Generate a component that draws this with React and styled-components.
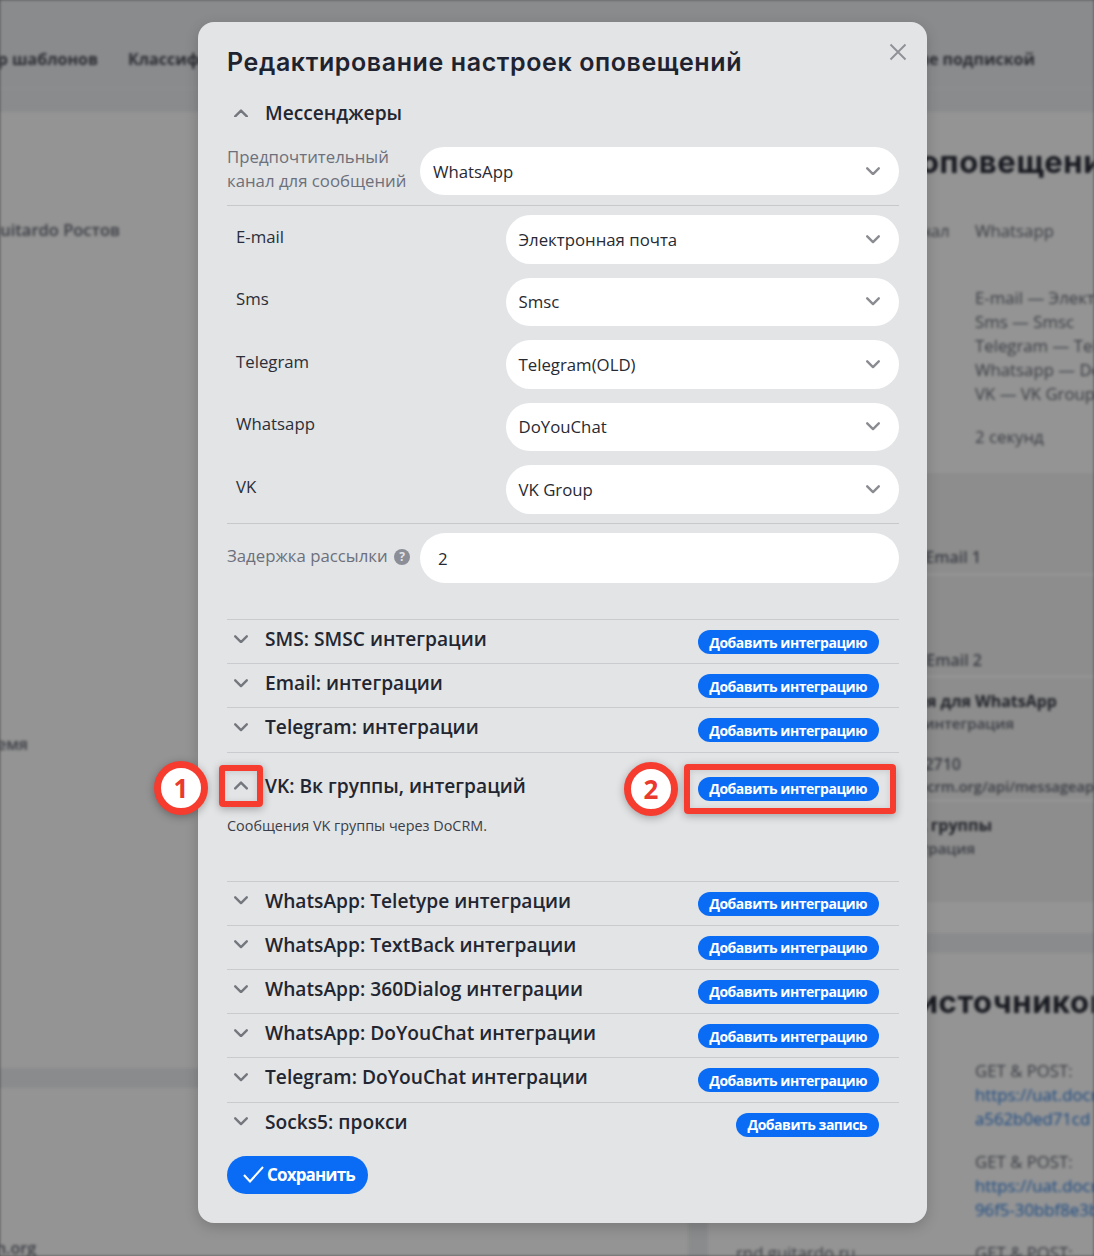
import React from "react";
import styled, { createGlobalStyle } from "styled-components";

const Global = createGlobalStyle`
  html, body { margin: 0; padding: 0; background: #8a8b8d; }
  body { font-family: "Open Sans", "Liberation Sans", sans-serif; }
  * { box-sizing: border-box; }
`;

const Viewport = styled.div`
  position: relative;
  width: 1094px;
  height: 1256px;
  overflow: hidden;
`;

/* ---------- blurred page behind the modal ---------- */
const BehindPage = styled.div`
  width: 1094px;
  height: 1256px;
  overflow: hidden;
  background: #eef0f3;
  filter: blur(1.4px);
  color: #666a75;
`;
const HeaderBar = styled.div`
  display: flex;
  align-items: center;
  height: 89px;
  padding-top: 30px;
  padding-right: 59px;
  border-bottom: 1px solid #f6f7f8;
  font-size: 16px;
  font-weight: 700;
  color: #4a4d57;
  white-space: nowrap;
`;
const TabEnd = styled.div`
  display: flex;
  justify-content: flex-end;
  width: 98px;
  margin-right: 30px;
`;
const TabRight = styled.div`
  margin-left: auto;
`;
const Columns = styled.div`
  display: grid;
  grid-template-columns: 688px 386px;
  gap: 20px;
  padding-top: 23px;
`;
const Col = styled.div`
  display: flex;
  flex-direction: column;
  gap: 20px;
`;
const Panel = styled.div`
  background: #ffffff;
  height: ${(p) => p.$h}px;
  padding-top: ${(p) => p.$pt || 0}px;
  overflow: hidden;
`;
const EndText = styled.div`
  display: flex;
  justify-content: flex-end;
  width: ${(p) => p.$end}px;
  margin-top: ${(p) => p.$mt || 0}px;
  font-size: ${(p) => p.$size || 16}px;
  line-height: 22px;
  font-weight: 600;
  white-space: nowrap;
`;
const BgHeading = styled.div`
  margin-left: 28px;
  margin-top: ${(p) => p.$mt}px;
  font-family: Inter, sans-serif;
  font-size: 31px;
  line-height: 36px;
  font-weight: 700;
  letter-spacing: 0.6px;
  color: #2a2d38;
  white-space: nowrap;
`;
const BgRow = styled.div`
  display: grid;
  grid-template-columns: 239px 1fr;
  padding-left: 28px;
  margin-top: ${(p) => p.$mt || 0}px;
  font-size: 16.8px;
  line-height: 24px;
  white-space: nowrap;
`;
const BgLink = styled.div`
  color: #2f7fe0;
`;
const BgBlock = styled.div`
  margin-top: ${(p) => p.$mt || 0}px;
`;
const DarkRow = styled.div`
  height: ${(p) => p.$h}px;
  padding-top: ${(p) => p.$pt}px;
  padding-left: 28px;
  background: #f3f3f3;
  border-bottom: 3px solid #ffffff;
`;
const BgStrong = styled(EndText)`
  font-size: 16px;
  font-weight: 700;
  color: #3a3d47;
`;

const Backdrop = styled.div`
  position: absolute;
  inset: 0;
  background: rgba(0, 0, 0, 0.42);
`;

/* ---------- modal ---------- */
const Dialog = styled.div`
  position: absolute;
  left: 198px;
  top: 22px;
  width: 729px;
  padding: 23px 28px 29px 29px;
  background: #e2e4e6;
  border-radius: 16px;
  box-shadow: 0 4px 14px rgba(0, 0, 0, 0.18);
  color: #22252f;
`;
const Title = styled.h1`
  margin: 0;
  font-family: Inter, "Open Sans", sans-serif;
  font-size: 25px;
  line-height: 34px;
  font-weight: 600;
  letter-spacing: 0.6px;
  color: #1f2330;
  white-space: nowrap;
`;
const CloseBtn = styled.button`
  position: absolute;
  top: 20px;
  right: 19px;
  width: 20px;
  height: 20px;
  padding: 0;
  border: 0;
  background: none;
  color: #8e9196;
  display: flex;
`;
const AccHead = styled.div`
  display: flex;
  align-items: center;
  height: 44px;
  margin-top: 12px;
`;
const ChevronSlot = styled.span`
  display: flex;
  justify-content: center;
  align-items: center;
  width: 28px;
  margin-right: 10px;
  color: #74777e;
  flex: none;
`;
const AccTitle = styled.div`
  font-size: 19.2px;
  line-height: 28px;
  font-weight: 600;
  color: #232631;
  white-space: nowrap;
`;
const PrefRow = styled.div`
  display: flex;
  align-items: center;
  margin-top: ${(p) => p.$mt || 0}px;
`;
const PrefLabel = styled.div`
  width: 193px;
  flex: none;
  margin-top: -4px;
  font-size: 16.8px;
  line-height: 24px;
  color: #6d707b;
  white-space: nowrap;
`;
const SelectBox = styled.div`
  flex: 1;
  display: flex;
  align-items: center;
  justify-content: space-between;
  height: ${(p) => p.$h || 48}px;
  padding: 0 19px 0 ${(p) => p.$pl || 12.5}px;
  background: #ffffff;
  border-radius: 25px;
  font-size: 16.8px;
  color: #272a33;
`;
const SelectChevron = styled.span`
  display: flex;
  color: #8a8c92;
`;
const Divider = styled.hr`
  margin: ${(p) => p.$mt}px 0 ${(p) => p.$mb}px;
  border: 0;
  border-top: 1px solid #c6c8cb;
`;
const ChannelGrid = styled.div`
  display: flex;
  flex-direction: column;
  gap: 14px;
`;
const ChannelRow = styled.div`
  display: flex;
  align-items: flex-start;
`;
const ChannelLabel = styled.div`
  width: 279px;
  flex: none;
  padding-left: 9px;
  font-size: 16.8px;
  line-height: 24px;
  margin-top: 9.5px;
  color: #2b2e38;
`;
const Help = styled.span`
  display: inline-flex;
  align-items: center;
  justify-content: center;
  vertical-align: 1px;
  width: 16px;
  height: 16px;
  margin-left: 2px;
  border-radius: 50%;
  background: #8b8e97;
  color: #e2e4e6;
  font-size: 12px;
  font-weight: 700;
  line-height: 1;
`;
const List = styled.div`
  margin-top: 36px;
`;
const IntRow = styled.div`
  border-top: 1px solid #c9cbce;
  min-height: ${(p) => (p.$open ? 129 : 44.2)}px;
  padding-top: ${(p) => (p.$open ? 14 : 0)}px;
`;
const IntHead = styled.div`
  display: flex;
  align-items: flex-start;
  justify-content: space-between;
`;
const IntTitleWrap = styled.div`
  display: flex;
  align-items: center;
  margin-top: 5px;
`;
const AddBtn = styled.button`
  margin: 10px 20px 0 0;
  height: 24px;
  padding: 0 12px 0 11px;
  border: 0;
  border-radius: 12px;
  background: #0a6cf5;
  color: #ffffff;
  font-family: "Open Sans", sans-serif;
  font-size: 14px;
  font-weight: 700;
  letter-spacing: -0.47px;
  white-space: nowrap;
`;
const Desc = styled.div`
  margin-top: 15px;
  font-size: 14.4px;
  line-height: 20px;
  color: #3b3e48;
`;
const SaveBtn = styled.button`
  display: flex;
  align-items: center;
  gap: 3px;
  margin-top: 10.2px;
  height: 38px;
  padding: 0 13px 0 16px;
  border: 0;
  border-radius: 19px;
  background: #0a6cf5;
  color: #ffffff;
  font-family: "Open Sans", sans-serif;
  font-size: 17px;
  font-weight: 700;
  letter-spacing: -0.85px;
`;

/* ---------- red annotations ---------- */
const Mark = styled.div`
  position: absolute;
  left: ${(p) => p.$x}px;
  top: ${(p) => p.$y}px;
  width: ${(p) => p.$w}px;
  height: ${(p) => p.$h}px;
  border: 6px solid #f63b2f;
  border-radius: 4px;
  box-shadow: 0 2px 8px rgba(0, 0, 0, 0.3), inset 0 1px 6px rgba(0, 0, 0, 0.12);
`;
const Badge = styled.div`
  position: absolute;
  left: ${(p) => p.$x}px;
  top: ${(p) => p.$y}px;
  width: 54px;
  height: 54px;
  display: flex;
  align-items: center;
  justify-content: center;
  border: 7px solid #f63b2f;
  border-radius: 50%;
  background: #ffffff;
  color: #ea3a30;
  font-family: "Open Sans", sans-serif;
  font-size: 26px;
  font-weight: 700;
  box-shadow: 0 2px 8px rgba(0, 0, 0, 0.3);
`;

const Chevron = ({ up, w = 14, sw = 2.4 }) => (
  <svg width={w} height={w * 0.62} viewBox="0 0 14 8.7" fill="none" stroke="currentColor" strokeWidth={sw} strokeLinecap="round" strokeLinejoin="round">
    <path d={up ? "M1.2 7.4 7 1.6l5.8 5.8" : "M1.2 1.3 7 7.1l5.8-5.8"} />
  </svg>
);

const channels = [
  ["E-mail", "Электронная почта"],
  ["Sms", "Smsc"],
  ["Telegram", "Telegram(OLD)"],
  ["Whatsapp", "DoYouChat"],
  ["VK", "VK Group"],
];

const Integration = ({ title, btn = "Добавить интеграцию", open, children }) => (
  <IntRow $open={open}>
    <IntHead>
      <IntTitleWrap>
        <ChevronSlot>
          <Chevron up={open} />
        </ChevronSlot>
        <AccTitle>{title}</AccTitle>
      </IntTitleWrap>
      <AddBtn>{btn}</AddBtn>
    </IntHead>
    {children}
  </IntRow>
);

export default function App() {
  return (
    <Viewport>
      <Global />
      <BehindPage>
        <HeaderBar>
          <TabEnd>Конструктор шаблонов</TabEnd>
          <div>Классификатор</div>
          <TabRight>Управление подпиской</TabRight>
        </HeaderBar>
        <Columns>
          <Col>
            <Panel $h={956} $pt={107}>
              <EndText $end={120} $size={16.5}>Rnd Guitardo Ростов</EndText>
              <EndText $end={28} $mt={492}>Время</EndText>
            </Panel>
            <Panel $h={200} $pt={149}>
              <EndText $end={36}>rnd.domain.org</EndText>
            </Panel>
          </Col>
          <Col>
            <Panel $h={821}>
              <BgHeading $mt={32}>Настройки оповещений</BgHeading>
              <BgRow $mt={39}>
                <div>Предпочтительный канал</div>
                <div>Whatsapp</div>
              </BgRow>
              <BgRow $mt={43}>
                <div>Каналы</div>
                <div>
                  E-mail — Электронная почта
                  <br />
                  Sms — Smsc
                  <br />
                  Telegram — Telegram(OLD)
                  <br />
                  Whatsapp — DoYouChat
                  <br />
                  VK — VK Group
                </div>
              </BgRow>
              <BgRow $mt={19}>
                <div>Задержка рассылки</div>
                <div>2 секунд</div>
              </BgRow>
              <BgBlock $mt={24}>
                <DarkRow $h={103} $pt={73}>
                  <EndText $end={245}>Интеграция Email 1</EndText>
                </DarkRow>
                <DarkRow $h={102} $pt={73}>
                  <EndText $end={246}>Интеграция Email 2</EndText>
                </DarkRow>
                <DarkRow $h={124} $pt={12}>
                  <BgStrong $end={321}>Интеграция для WhatsApp</BgStrong>
                  <EndText $end={278} $size={15}>DoYouChat интеграция</EndText>
                  <EndText $end={225} $mt={19}>79042710</EndText>
                  <EndText $end={358} $size={14.6}>https://uat.docrm.org/api/messageap</EndText>
                </DarkRow>
                <DarkRow $h={103} $pt={12}>
                  <BgStrong $end={256}>Интеграция VK группы</BgStrong>
                  <EndText $end={239} $mt={1} $size={15}>VK интеграция</EndText>
                </DarkRow>
              </BgBlock>
            </Panel>
            <Panel $h={400}>
              <BgHeading $mt={31}>Настройка источников</BgHeading>
              <BgRow $mt={39}>
                <div>&nbsp;</div>
                <div>
                  GET &amp; POST:
                  <BgLink>https://uat.docrm.org/api/</BgLink>
                  <BgLink>a562b0ed71cd</BgLink>
                </div>
              </BgRow>
              <BgRow $mt={19}>
                <div>&nbsp;</div>
                <div>
                  GET &amp; POST:
                  <BgLink>https://uat.docrm.org/api/</BgLink>
                  <BgLink>96f5-30bbf8e3b</BgLink>
                </div>
              </BgRow>
              <BgRow $mt={19}>
                <div>rnd.guitardo.ru</div>
                <div>GET &amp; POST:</div>
              </BgRow>
            </Panel>
          </Col>
        </Columns>
      </BehindPage>
      <Backdrop />

      <Dialog>
        <Title>Редактирование настроек оповещений</Title>
        <CloseBtn aria-label="close">
          <svg width="20" height="20" viewBox="0 0 20 20" fill="none" stroke="currentColor" strokeWidth="1.9">
            <path d="M2.5 2.5l15 15M17.5 2.5l-15 15" />
          </svg>
        </CloseBtn>
        <AccHead>
          <ChevronSlot>
            <Chevron up />
          </ChevronSlot>
          <AccTitle>Мессенджеры</AccTitle>
        </AccHead>
        <PrefRow $mt={12}>
          <PrefLabel>
            Предпочтительный
            <br />
            канал для сообщений
          </PrefLabel>
          <SelectBox $pl={13}>
            WhatsApp
            <SelectChevron>
              <Chevron />
            </SelectChevron>
          </SelectBox>
        </PrefRow>
        <Divider $mt={10} $mb={9} />
        <ChannelGrid>
          {channels.map(([l, v]) => (
            <ChannelRow key={l}>
              <ChannelLabel>{l}</ChannelLabel>
              <SelectBox $h={48.5}>
                {v}
                <SelectChevron>
                  <Chevron />
                </SelectChevron>
              </SelectBox>
            </ChannelRow>
          ))}
        </ChannelGrid>
        <Divider $mt={9.5} $mb={9} />
        <PrefRow>
          <PrefLabel>
            Задержка рассылки <Help>?</Help>
          </PrefLabel>
          <SelectBox $h={50} $pl={18}>2</SelectBox>
        </PrefRow>
        <List>
          <Integration title="SMS: SMSC интеграции" />
          <Integration title="Email: интеграции" />
          <Integration title="Telegram: интеграции" />
          <Integration title="VK: Вк группы, интеграций" open>
            <Desc>Сообщения VK группы через DoCRM.</Desc>
          </Integration>
          <Integration title="WhatsApp: Teletype интеграции" />
          <Integration title="WhatsApp: TextBack интеграции" />
          <Integration title="WhatsApp: 360Dialog интеграции" />
          <Integration title="WhatsApp: DoYouChat интеграции" />
          <Integration title="Telegram: DoYouChat интеграции" />
          <Integration title="Socks5: прокси" btn="Добавить запись" />
        </List>
        <SaveBtn>
          <svg width="21" height="17" viewBox="0 0 21 17" fill="none" stroke="currentColor" strokeWidth="2.1">
            <path d="M1 9l6 6.5L20 1" />
          </svg>
          Сохранить
        </SaveBtn>
      </Dialog>

      <Mark $x={219} $y={765} $w={44} $h={42} />
      <Mark $x={684} $y={764} $w={212} $h={50} />
      <Badge $x={154} $y={761}>1</Badge>
      <Badge $x={624} $y={762}>2</Badge>
    </Viewport>
  );
}
